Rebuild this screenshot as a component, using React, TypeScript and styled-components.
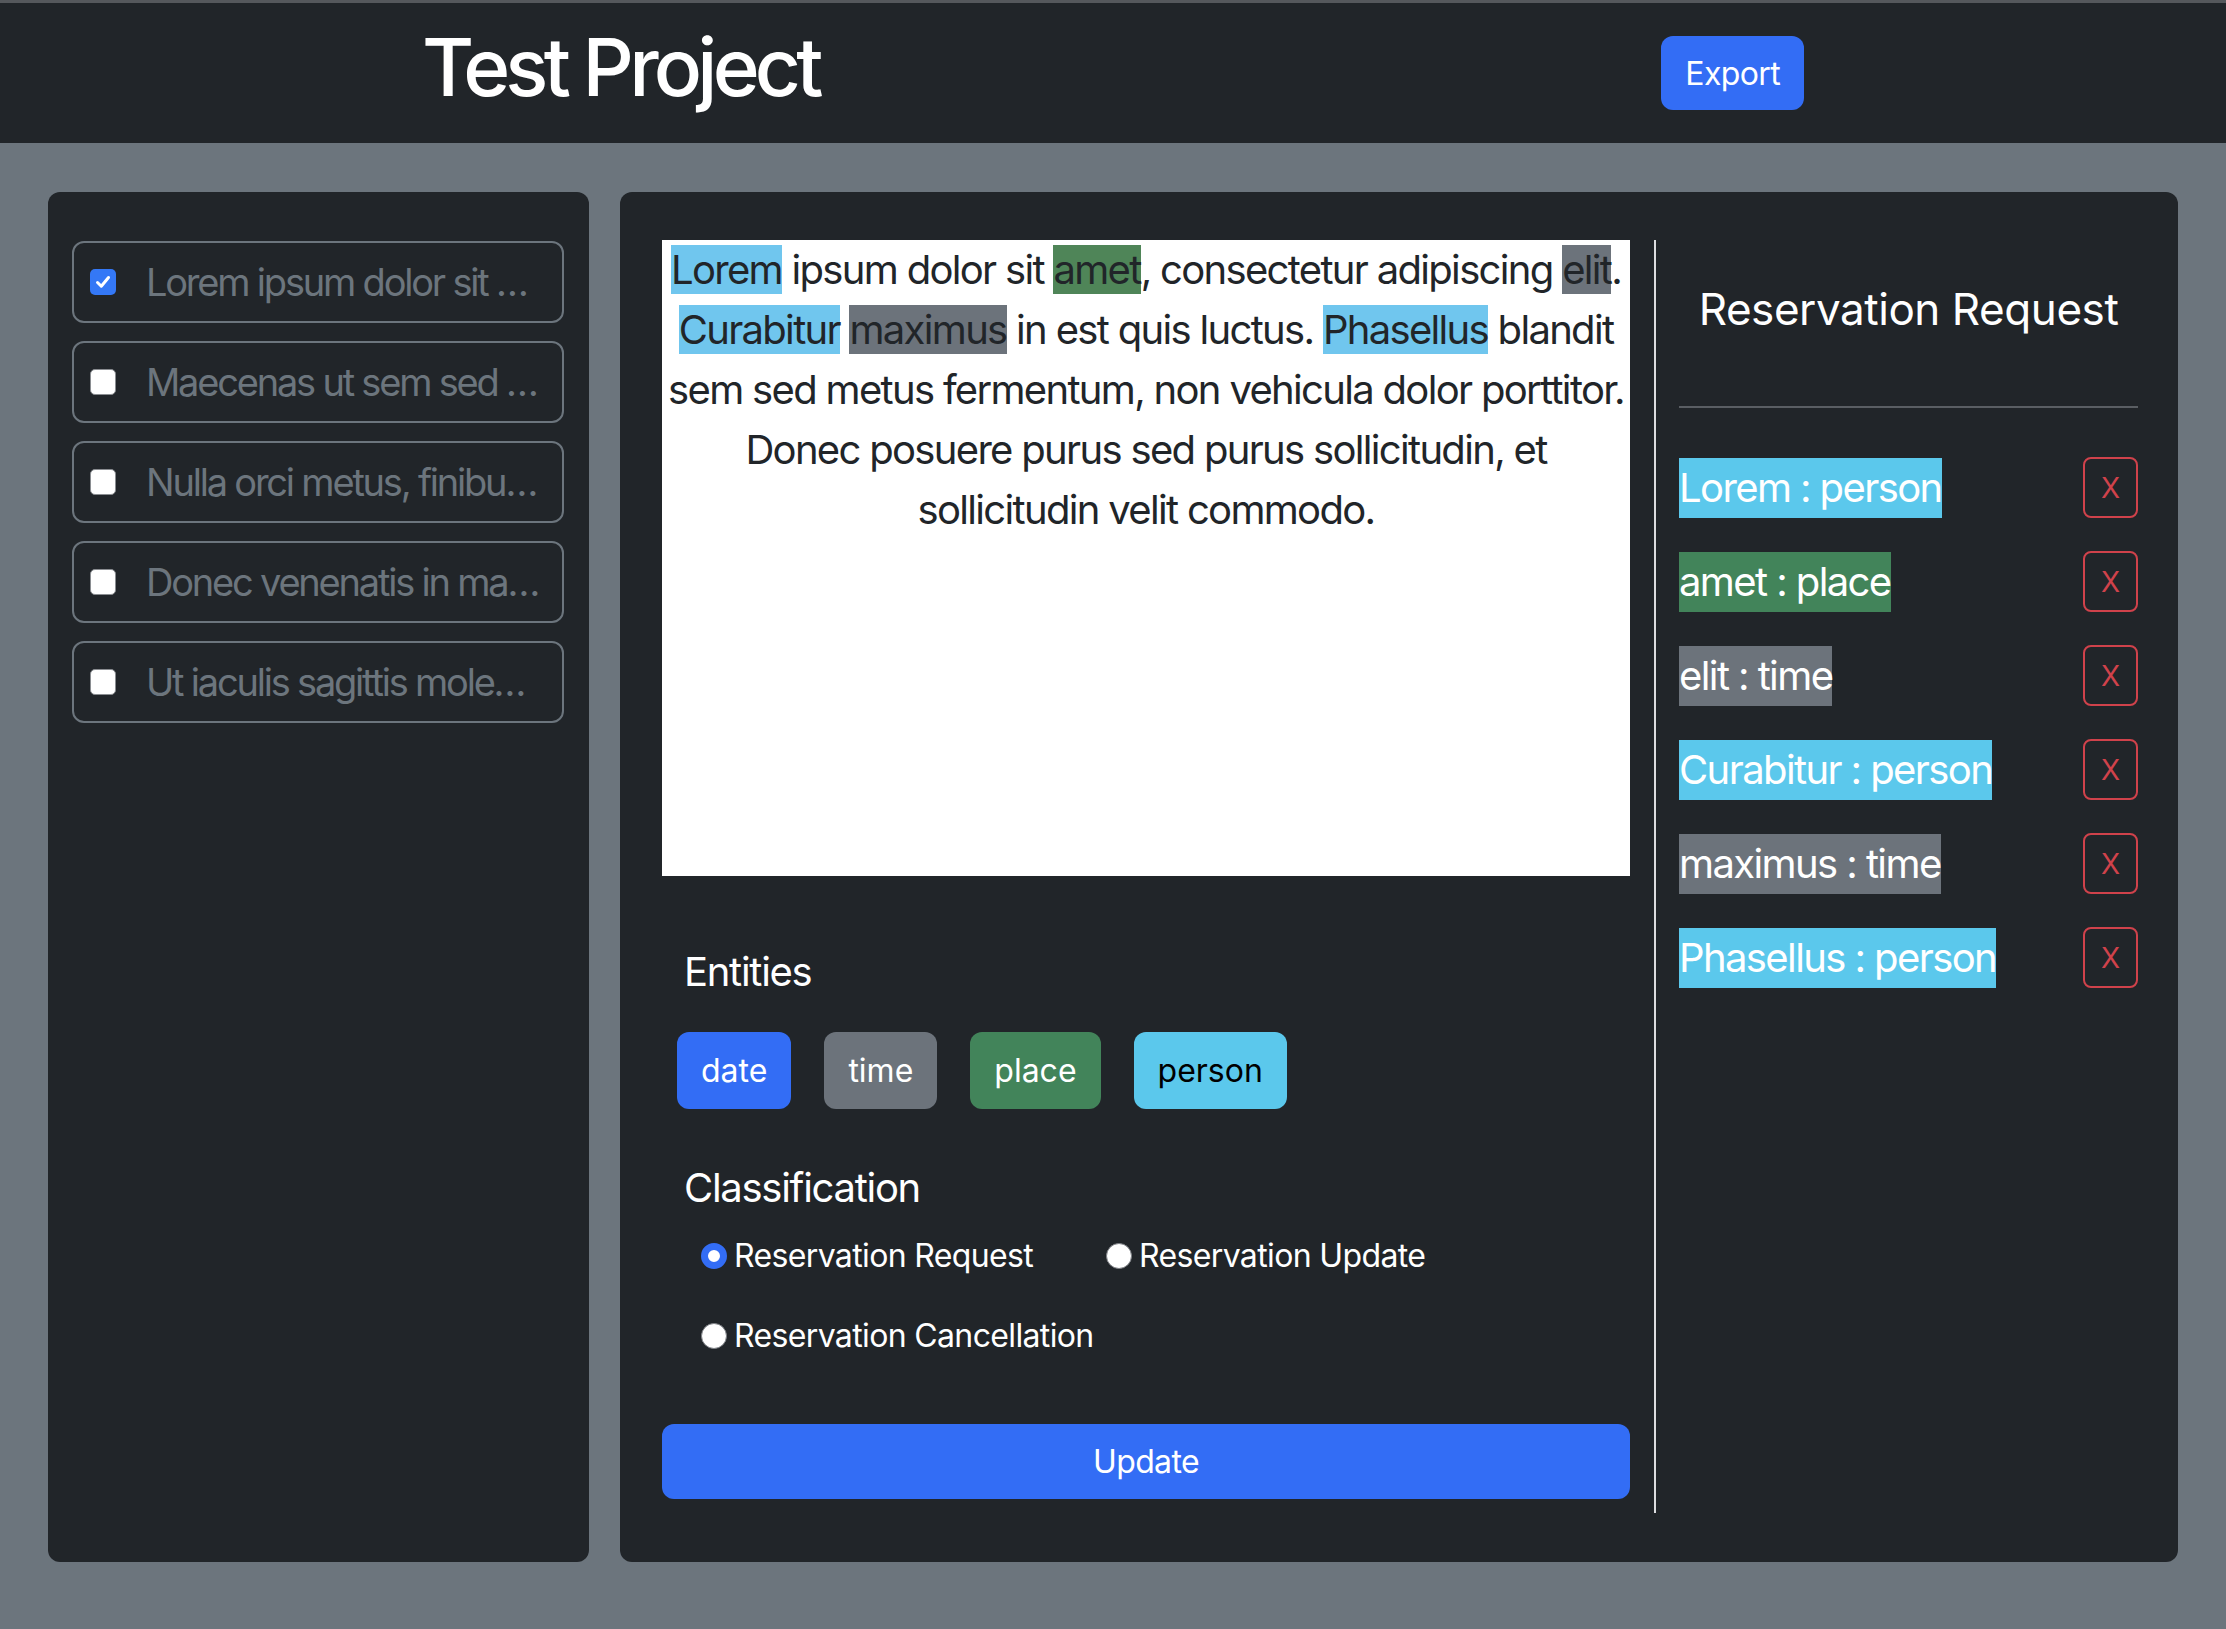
import React from "react";
import styled, { createGlobalStyle } from "styled-components";

const C = {
  dark: "#212529",
  page: "#6c757d",
  blue: "#336df5",
  gray: "#6c737b",
  green: "#42845a",
  cyan: "#5bc8ec",
  hlCyan: "#70c6ee",
  hlGreen: "#4f8558",
  red: "#d0424b",
};

const GlobalStyle = createGlobalStyle`
  html, body { margin: 0; padding: 0; }
  body {
    background: ${C.page};
    font-family: Inter, "Noto Sans", sans-serif;
    color: #fff;
  }
  * { box-sizing: border-box; }
`;

const Header = styled.header`
  display: flex;
  align-items: center;
  justify-content: space-between;
  height: 143px;
  padding: 0 422px;
  background: ${C.dark};
  border-top: 3px solid #55585c;
`;

const Title = styled.h1`
  margin: 0 0 12px;
  font-size: 80px;
  line-height: 96px;
  font-weight: 500;
  letter-spacing: -0.06em;
  color: #fff;
`;

const PrimaryButton = styled.button<{ $block?: boolean }>`
  display: block;
  width: ${(p) => (p.$block ? "100%" : "auto")};
  height: ${(p) => (p.$block ? "75px" : "74px")};
  padding: 0 24px;
  border: none;
  border-radius: 12px;
  background: ${C.blue};
  color: #fff;
  font-family: inherit;
  font-size: 32px;
  letter-spacing: -0.02em;
`;

const Main = styled.main`
  display: grid;
  grid-template-columns: 541px 1fr;
  gap: 31px;
  padding: 49px 48px 67px;
`;

const Panel = styled.section`
  background: ${C.dark};
  border-radius: 12px;
`;

const DocList = styled(Panel)`
  display: flex;
  flex-direction: column;
  gap: 18px;
  padding: 49px 25px 24px 24px;
`;

const DocItem = styled.div`
  display: flex;
  align-items: center;
  gap: 30px;
  height: 82px;
  padding-left: 16px;
  border: 2px solid ${C.page};
  border-radius: 12px;
  overflow: hidden;
`;

const Check = styled.span<{ $on?: boolean }>`
  flex: none;
  display: flex;
  align-items: center;
  justify-content: center;
  width: 26px;
  height: 26px;
  border-radius: 5px;
  background: ${(p) => (p.$on ? "#3478f6" : "#fff")};
  border: ${(p) => (p.$on ? "none" : "1.5px solid #8a8d91")};
`;

const DocText = styled.span`
  font-size: 38px;
  line-height: 60px;
  letter-spacing: -0.058em;
  color: ${C.page};
  white-space: nowrap;
`;

const Workspace = styled(Panel)`
  display: grid;
  grid-template-columns: 968px 1fr;
  column-gap: 24px;
  padding: 48px 40px 49px 42px;
`;

const EditorColumn = styled.div`
  display: flex;
  flex-direction: column;
  padding-bottom: 14px;
`;

const TextBox = styled.div`
  height: 636px;
  background: #fff;
  color: ${C.dark};
  text-align: center;
  font-size: 40px;
  line-height: 60px;
  letter-spacing: -0.042em;
`;

const Mark = styled.span<{ $bg: string }>`
  background: ${(p) => p.$bg};
`;

const SectionTitle = styled.h5<{ $top: number }>`
  margin: ${(p) => p.$top}px 0 0;
  padding-left: 22px;
  font-size: 40px;
  line-height: 60px;
  font-weight: 400;
  letter-spacing: -0.032em;
`;

const TagRow = styled.div`
  display: flex;
  gap: 33px;
  margin-top: 30px;
  padding-left: 15px;
`;

const TagButton = styled.button<{ $bg: string; $dark?: boolean }>`
  height: 77px;
  padding: 0 24px;
  border: none;
  border-radius: 12px;
  background: ${(p) => p.$bg};
  color: ${(p) => (p.$dark ? "#000" : "#fff")};
  font-family: inherit;
  font-size: 32px;
`;

const RadioGrid = styled.div`
  display: grid;
  grid-template-columns: 405px auto;
  justify-content: start;
  row-gap: 32px;
  margin-top: 14px;
  padding-left: 39px;
`;

const RadioOption = styled.label`
  display: flex;
  align-items: center;
  gap: 7px;
  font-size: 32px;
  line-height: 48px;
  letter-spacing: -0.02em;
  color: #fff;
`;

const RadioDot = styled.span<{ $on?: boolean }>`
  flex: none;
  width: 26px;
  height: 26px;
  border-radius: 50%;
  background: #fff;
  border: ${(p) => (p.$on ? `7px solid ${C.blue}` : "1.5px solid #7d8085")};
`;

const UpdateWrap = styled.div`
  margin-top: 64px;
`;

const SideColumn = styled.aside`
  display: flex;
  flex-direction: column;
  padding-left: 23px;
  border-left: 2px solid #dcdde0;
`;

const SideTitle = styled.h4`
  margin: 40px 0 0;
  text-align: center;
  font-size: 44px;
  line-height: 58px;
  font-weight: 400;
  letter-spacing: -0.01em;
`;

const Rule = styled.hr`
  margin: 68px 0 0;
  height: 2px;
  border: none;
  background: #5a5e63;
`;

const EntityList = styled.div`
  display: flex;
  flex-direction: column;
  gap: 33px;
  margin-top: 49px;
`;

const EntityRow = styled.div`
  display: flex;
  align-items: center;
  justify-content: space-between;
  height: 61px;
`;

const EntityLabel = styled.span<{ $bg: string }>`
  background: ${(p) => p.$bg};
  color: #fff;
  font-size: 40px;
  line-height: 60px;
  letter-spacing: -0.04em;
`;

const RemoveButton = styled.button`
  width: 55px;
  height: 61px;
  padding: 0;
  border: 2px solid ${C.red};
  border-radius: 8px;
  background: transparent;
  color: ${C.red};
  font-family: inherit;
  font-size: 28px;
`;

const docs = [
  { text: "Lorem ipsum dolor sit …", checked: true },
  { text: "Maecenas ut sem sed …", checked: false },
  { text: "Nulla orci metus, finibu…", checked: false },
  { text: "Donec venenatis in ma…", checked: false },
  { text: "Ut iaculis sagittis mole…", checked: false },
];

const entities = [
  { word: "Lorem", type: "person", bg: C.cyan },
  { word: "amet", type: "place", bg: C.green },
  { word: "elit", type: "time", bg: C.gray },
  { word: "Curabitur", type: "person", bg: C.cyan },
  { word: "maximus", type: "time", bg: C.gray },
  { word: "Phasellus", type: "person", bg: C.cyan },
];

const CheckMark = () => (
  <svg width="18" height="18" viewBox="0 0 18 18">
    <path d="M3.5 9.5 L7.3 13.2 L14.5 4.5" fill="none" stroke="#fff" strokeWidth="3" strokeLinecap="round" strokeLinejoin="round" />
  </svg>
);

export default function App() {
  return (
    <>
      <GlobalStyle />
      <Header>
        <Title>Test Project</Title>
        <PrimaryButton>Export</PrimaryButton>
      </Header>
      <Main>
        <DocList>
          {docs.map((d) => (
            <DocItem key={d.text}>
              <Check $on={d.checked}>{d.checked && <CheckMark />}</Check>
              <DocText>{d.text}</DocText>
            </DocItem>
          ))}
        </DocList>
        <Workspace>
          <EditorColumn>
            <TextBox>
              <Mark $bg={C.hlCyan}>Lorem</Mark> ipsum dolor sit <Mark $bg={C.hlGreen}>amet</Mark>, consectetur
              adipiscing <Mark $bg={C.gray}>elit</Mark>. <Mark $bg={C.hlCyan}>Curabitur</Mark>{" "}
              <Mark $bg={C.gray}>maximus</Mark> in est quis luctus. <Mark $bg={C.hlCyan}>Phasellus</Mark> blandit
              sem sed metus fermentum, non vehicula dolor porttitor. Donec posuere purus sed purus sollicitudin, et
              sollicitudin velit commodo.
            </TextBox>
            <SectionTitle $top={66}>Entities</SectionTitle>
            <TagRow>
              <TagButton $bg={C.blue}>date</TagButton>
              <TagButton $bg={C.gray}>time</TagButton>
              <TagButton $bg={C.green}>place</TagButton>
              <TagButton $bg={C.cyan} $dark>
                person
              </TagButton>
            </TagRow>
            <SectionTitle $top={49}>Classification</SectionTitle>
            <RadioGrid>
              <RadioOption>
                <RadioDot $on />
                Reservation Request
              </RadioOption>
              <RadioOption>
                <RadioDot />
                Reservation Update
              </RadioOption>
              <RadioOption>
                <RadioDot />
                Reservation Cancellation
              </RadioOption>
            </RadioGrid>
            <UpdateWrap>
              <PrimaryButton $block>Update</PrimaryButton>
            </UpdateWrap>
          </EditorColumn>
          <SideColumn>
            <SideTitle>Reservation Request</SideTitle>
            <Rule />
            <EntityList>
              {entities.map((e) => (
                <EntityRow key={e.word}>
                  <EntityLabel $bg={e.bg}>
                    {e.word} : {e.type}
                  </EntityLabel>
                  <RemoveButton>X</RemoveButton>
                </EntityRow>
              ))}
            </EntityList>
          </SideColumn>
        </Workspace>
      </Main>
    </>
  );
}
